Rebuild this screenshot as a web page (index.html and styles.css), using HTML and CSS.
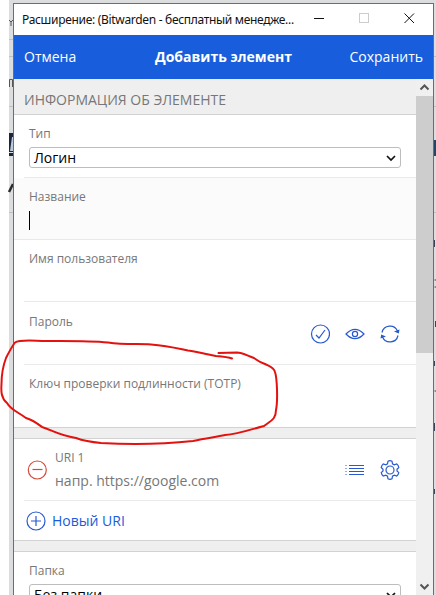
FILE: index.html
```html
<!DOCTYPE html>
<html lang="ru">
<head>
<meta charset="utf-8">
<title>Bitwarden</title>
<link rel="stylesheet" href="styles.css">
</head>
<body>
<div class="desktop">
  <svg class="backdrop" width="436" height="595" viewBox="0 0 436 595">
    <path d="M9 0H436V595H9z" fill="#dcdddf"/>
    <path d="M9 39.500H13M9 56.500H13M9 106.500H13M9 212.500H13M434 56.500H436M434 106.500H436M434 212.500H436" stroke="#bcbfc3"/>
    <path d="M9 20l2 2v4M11 22l2-2M9.500 87V79.500H12.500V87" fill="none" stroke="#555"/>
    <path d="M9 133H13V152H9zM9 153H13V156H9z" fill="#1c2638"/>
    <path d="M12 137L10 151H13V137z" fill="#bccbdc"/>
    <path d="M9 192L13 184" stroke="#292a2c" stroke-width="2.500"/>
    <path d="M434 140h2v16h-2z" fill="#204668"/>
    <path d="M434.500 240v7M434.500 280h2M434.500 287h2M435.500 321v6M434.500 361v5M434.500 391h2M434.500 423v8M434.500 489v5" stroke="#394357"/>
  </svg>
  <main class="window">
    <div class="titlebar">
      <span class="caption">Расширение: (Bitwarden - бесплатный менедже...</span>
      <svg class="controls" width="119" height="31" viewBox="0 0 119 31">
        <path d="M0 14.500H10M90.500 9.500L100 19M100 9.500L90.500 19" fill="none" stroke="#111"/>
        <rect x="45.500" y="9.500" width="9" height="9" fill="none" stroke="#ccc"/>
      </svg>
    </div>
    <header class="header">
      <span class="cancel">Отмена</span>
      <strong class="heading">Добавить элемент</strong>
      <span class="save">Сохранить</span>
    </header>
    <div class="viewport">
      <div class="content">
        <h2 class="section">ИНФОРМАЦИЯ ОБ ЭЛЕМЕНТЕ</h2>
        <section class="group">
          <div class="row type">
            <span class="label">Тип</span>
            <div class="select"><span>Логин</span><svg width="10" height="8" viewBox="0 0 10 8"><path d="M1 2l4 4 4-4" fill="none" stroke="#111" stroke-width="1.700"/></svg></div>
          </div>
          <div class="row focused"><span class="label">Название</span><i class="caret"></i></div>
          <div class="row"><span class="label">Имя пользователя</span></div>
          <div class="row password">
            <span class="label">Пароль</span>
            <div class="actions">
              <svg width="20" height="20" viewBox="0 0 20 20"><circle cx="10.500" cy="10" r="9"/><path d="M6 11l3 3 6-8"/></svg>
              <svg width="20" height="20" viewBox="0 0 20 20"><path d="M1 10Q10 .7 19 10Q10 19.300 1 10z"/><circle cx="10" cy="10" r="2.600"/></svg>
              <svg width="20" height="20" viewBox="0 0 20 20"><path d="M2 8.500A8.200 8.200 0 0 1 17.500 7M18 11.500A8.200 8.200 0 0 1 2.500 13"/><path class="solid" d="M14 7.500l5.500-2-.7 4zM6 12.500l-5.500 2 .7-4z"/></svg>
            </div>
          </div>
          <div class="row"><span class="label">Ключ проверки подлинности (TOTP)</span></div>
        </section>
        <section class="group spaced">
          <div class="row uri">
            <svg class="remove" width="20" height="20" viewBox="0 0 20 20"><circle cx="10.300" cy="10" r="9"/><path d="M5.500 9.500h10"/></svg>
            <div class="uri-text"><span class="label">URI 1</span><span class="placeholder">напр. https://google.com</span></div>
            <div class="actions">
              <svg width="20" height="20" viewBox="0 0 20 20"><path d="M4 5.500h15M4 8.500h15M4 11.500h15M4 14.500h15M.5 5.500h1M.5 8.500h1M.5 11.500h1M.5 14.500h1"/></svg>
              <svg width="20" height="20" viewBox="0 0 20 20"><path d="M8 1.200Q10 .2 12 1.200L12.500 3.800L14.200 4.800L16.800 4Q18.500 5.200 18.800 7.500L17 9.200V11L18.800 12.600Q18.300 14.800 16.800 16L14.200 15.200L12.500 16.200L12 18.800Q10 19.800 8 18.800L7.500 16.200L5.800 15.200L3.200 16Q1.700 14.800 1.200 12.600L3 11V9.200L1.200 7.500Q1.700 5.200 3.200 4L5.800 4.800L7.500 3.800z"/><circle cx="10" cy="10" r="4"/></svg>
            </div>
          </div>
          <div class="new-uri"><svg width="20" height="20" viewBox="0 0 20 20"><circle cx="10" cy="10" r="9"/><path d="M5 10h10M10 5v10"/></svg><span>Новый URI</span></div>
        </section>
        <section class="group spaced">
          <div class="row type">
            <span class="label">Папка</span>
            <div class="select"><span>Без папки</span><svg width="10" height="8" viewBox="0 0 10 8"><path d="M1 2l4 4 4-4" fill="none" stroke="#111" stroke-width="1.700"/></svg></div>
          </div>
        </section>
      </div>
      <div class="scrollbar">
        <svg width="17" height="17" viewBox="0 0 17 17"><path d="M4.500 10.500l4-4 4 4"/></svg>
        <div class="thumb"></div>
        <svg class="down" width="17" height="17" viewBox="0 0 17 17"><path d="M4.500 6.500l4 4 4-4"/></svg>
      </div>
    </div>
  </main>
  <svg class="annotation" width="436" height="595" viewBox="0 0 436 595">
    <path d="M232 358.500C228 357 222 356.500 216 356C205 354 193 351 188 350.500C180 349 169 346 151 344.500C139 343.500 125 345 108 342.500C88 340.500 61 341 46 341C35 341 20 339 15 342.500C11 348 9 352 6 358C3 366 1.500 374 1.500 384C1 391 1 398 7 403C11 410 18 412 26 418C33 420 38 424 42 427C52 430 58 435 76 438C84 441 90 442 101 443C128 444.500 165 444 193 441C207 438 216 437 225 435C239 434 252 429 264 426C270 421 276 420 276 410C278 400 277 378 275 372C274 367 269 366 265 364C259 362 257 360 254 358C246 355 242 352.500 237 352.500L218.500 353"/>
  </svg>
</div>
</body>
</html>
```
FILE: styles.css
```css
* { box-sizing: border-box; }
body { margin: 0; background: #fff; font-family: "Open Sans", sans-serif; }
svg { display: block; flex-shrink: 0; }
.desktop { position: relative; width: 436px; height: 595px; overflow: hidden; padding: 3px 2px 0 13px; }
.backdrop, .annotation { position: absolute; top: 0; left: 0; }
.annotation path { fill: none; stroke: #e3120f; stroke-width: 2; stroke-linecap: round; stroke-linejoin: round; }
.window { position: relative; height: 592px; border: 1px solid #6b6d70; border-bottom: 0; background: #fff; display: flex; flex-direction: column; }
.titlebar { height: 31px; display: flex; align-items: center; justify-content: space-between; padding-left: 8px; color: #111; }
.caption { font-family: "Noto Sans", sans-serif; font-size: 12px; letter-spacing: -0.310px; line-height: 17px; padding-bottom: 1px; white-space: nowrap; }
.header { height: 44px; display: grid; grid-template-columns: 1fr auto 1fr; align-items: center; background: #175ddc; color: #fff; padding: 0 10px 2px; font-size: 14px; }
.save { text-align: right; }
.viewport { flex: 1; min-height: 0; display: flex; }
.content { flex: 1; background: #efefef; overflow: hidden; }
.section { height: 35px; margin: 0; padding: 7px 10px 0; font-size: 14px; line-height: 28px; font-weight: 400; color: #777; }
.group { background: #fff; border-top: 1px solid #d2d2d2; border-bottom: 1px solid #d2d2d2; padding-left: 10px; }
.spaced { margin-top: 10px; }
.row { height: 62px; padding: 10px 16px 0 5px; border-bottom: 1px solid #e9e9e9; }
.type, .password { height: 63px; }
.group > .row:last-child { border-bottom: 0; }
.label { display: block; font-size: 12px; line-height: 17px; color: #777; }
.select { width: 372px; height: 21px; margin-top: 5px; border: 1px solid #bdbdbd; border-radius: 3px; display: flex; align-items: center; justify-content: space-between; padding: 0 4px; font-size: 14px; line-height: 19px; color: #000; }
.focused { margin-left: -10px; padding-left: 15px; background: #fbfbfb; }
.caret { display: block; width: 1px; height: 19px; margin-top: 6px; background: #000; }
.password, .uri { display: flex; justify-content: space-between; }
.password { padding-top: 11px; }
.actions { display: flex; gap: 15px; padding-top: 11px; }
.actions svg, .new-uri svg { fill: none; stroke: #2859d0; stroke-width: 1.200; }
.actions .solid { fill: #2859d0; stroke: none; }
.uri { justify-content: flex-start; padding-left: 3px; }
.uri .actions { margin-left: auto; }
.remove { margin-top: 11px; fill: none; stroke: #d34b3c; stroke-width: 1.200; }
.uri-text { padding-left: 8px; }
.placeholder { display: block; font-size: 14px; line-height: 20px; margin-top: 5px; color: #777; }
.new-uri { height: 39px; display: flex; align-items: center; gap: 6px; padding-left: 2px; font-size: 14px; color: #175ddc; }
.scrollbar { width: 17px; background: #f0f0f0; display: flex; flex-direction: column; }
.scrollbar svg { fill: none; stroke: #555; stroke-width: 2; }
.thumb { height: 257px; background: #cdcdcd; }
.scrollbar .down { margin-top: auto; }
```
